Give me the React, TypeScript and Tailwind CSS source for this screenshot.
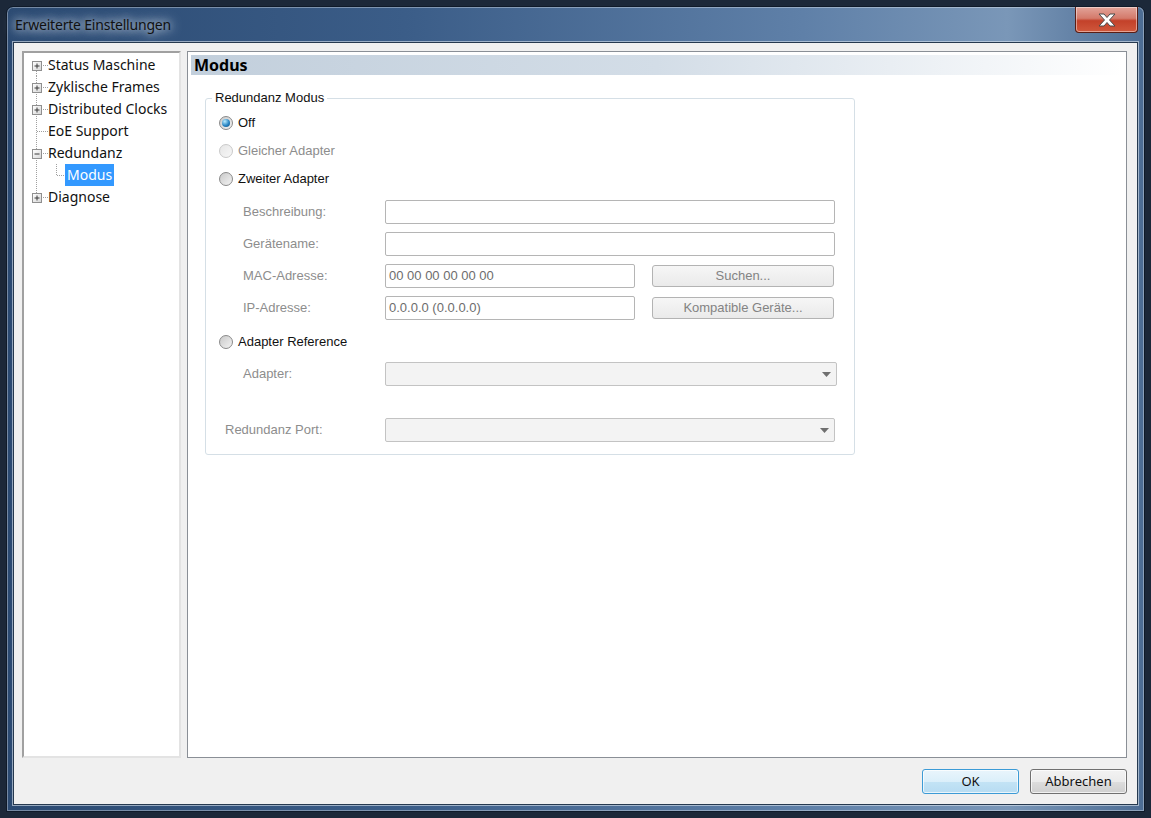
import React from 'react';

const sans = { fontFamily: '"Noto Sans", sans-serif' };
const arial = { fontFamily: '"Liberation Sans", Arial, sans-serif' };

type TreeRow = { label: string; box?: 'plus' | 'minus'; first?: boolean; last?: boolean; child?: boolean; selected?: boolean };

const treeRows: TreeRow[] = [
  { label: 'Status Maschine', box: 'plus', first: true },
  { label: 'Zyklische Frames', box: 'plus' },
  { label: 'Distributed Clocks', box: 'plus' },
  { label: 'EoE Support' },
  { label: 'Redundanz', box: 'minus' },
  { label: 'Modus', child: true, selected: true },
  { label: 'Diagnose', box: 'plus', last: true },
];

// gutter drawing: dotted lines + expander box
function Gutter({ row }: { row: TreeRow }) {
  const y1 = row.first ? 11 : 0;
  const y2 = row.last ? 11 : 22;
  return (
    <svg width="24" height="22" className="shrink-0">
      <line x1="12.5" y1={y1} x2="12.5" y2={y2} stroke="#a0a0a0" strokeDasharray="1 1" />
      {!row.child && <line x1="13" y1="11.5" x2="24" y2="11.5" stroke="#a0a0a0" strokeDasharray="1 1" />}
      {row.box && (
        <g>
          <defs>
            <linearGradient id="bx" x1="0" y1="0" x2="1" y2="1">
              <stop offset="0" stopColor="#ffffff" />
              <stop offset="1" stopColor="#d6d6d6" />
            </linearGradient>
          </defs>
          <rect x="8.5" y="7.5" width="9" height="9" fill="url(#bx)" stroke="#8f8f8f" />
          <line x1="10.5" y1="12" x2="15.5" y2="12" stroke="#3b3b3b" />
          {row.box === 'plus' && <line x1="13" y1="9.5" x2="13" y2="14.5" stroke="#3b3b3b" />}
        </g>
      )}
    </svg>
  );
}

function Radio({ checked, disabled }: { checked?: boolean; disabled?: boolean }) {
  return (
    <span
      className={
        'inline-flex h-[14px] w-[14px] shrink-0 items-center justify-center rounded-full border ' +
        (disabled
          ? 'border-[#c9c9c9] bg-[linear-gradient(135deg,#e6e6e6,#f7f7f7)]'
          : 'border-[#8a8a8a] bg-[linear-gradient(135deg,#c9c9c9,#f3f3f3)]')
      }
    >
      {checked && (
        <span className="h-[8px] w-[8px] rounded-full bg-[radial-gradient(circle_at_35%_30%,#b9ecff,#2a86c4_55%,#0d4a7c)]" />
      )}
    </span>
  );
}

function TextBox({ value, width = 'w-[450px]' }: { value?: string; width?: string }) {
  return (
    <div
      className={width + ' flex h-[24px] items-center rounded-[2px] border border-[#b5b5b5] bg-white pl-[3px] text-[13px] text-[#6d6d6d]'}
      style={arial}
    >
      {value}
    </div>
  );
}

function Combo({ width }: { width: string }) {
  return (
    <div className={width + ' flex h-[24px] items-center justify-end rounded-[2px] border border-[#c3c3c3] bg-[#f3f3f3] pr-[5px]'}>
      <svg width="9" height="5" viewBox="0 0 9 5">
        <path d="M0 0 H9 L4.5 5 Z" fill="#6f6f6f" />
      </svg>
    </div>
  );
}

function GrayButton({ label }: { label: string }) {
  return (
    <div
      className="ml-[17px] flex h-[22px] w-[182px] items-center justify-center rounded-[3px] border border-[#b3b3b3] bg-[linear-gradient(#f6f6f6,#eaeaea)] text-[13px] text-[#838383]"
      style={arial}
    >
      {label}
    </div>
  );
}

function FieldLabel({ text, indent = 'pl-[37px]', width = 'w-[179px]' }: { text: string; indent?: string; width?: string }) {
  return (
    <div className={width + ' ' + indent + ' shrink-0 text-[13px] text-[#8d8d8d]'} style={arial}>
      {text}
    </div>
  );
}

export default function App() {
  return (
    <div className="h-[818px] w-[1151px] overflow-hidden bg-[#1c2839] p-[6px]">
      <div className="flex h-[806px] w-[1139px] flex-col rounded-t-[7px] border border-[#0f1a29] bg-[linear-gradient(90deg,#2b4a72_0%,#3b5d88_35%,#5f80a8_70%,#7a97b8_88%,#4d6d94_100%)] px-[6px] pb-[6px] shadow-[inset_0_0_0_1px_rgba(255,255,255,0.35)]">
        {/* title bar */}
        <div className="flex h-[35px] shrink-0 items-start justify-between">
          <div
            className="mt-[9px] pl-[2px] text-[14px] leading-[18px] tracking-[-0.2px] text-[#111] [text-shadow:0_0_8px_#dfe8f2,0_0_14px_#cdd9e6]"
            style={sans}
          >
            Erweiterte Einstellungen
          </div>
          <div className="flex h-[26px] w-[63px] items-center justify-center rounded-b-[4px] border border-t-0 border-[#5a1d14] bg-[linear-gradient(#e2a49a_0%,#d47a6b_45%,#c3412a_55%,#d0583c_100%)] shadow-[inset_0_0_0_1px_rgba(255,255,255,0.45)]">
            <svg width="22" height="16" viewBox="0 0 22 16">
              <path d="M3 2 L8 2 L11 5.5 L14 2 L19 2 L13.5 8 L19 14 L14 14 L11 10.5 L8 14 L3 14 L8.5 8 Z" fill="#ffffff" stroke="#4a4a4a" strokeWidth="1" strokeLinejoin="round" />
            </svg>
          </div>
        </div>

        {/* client area */}
        <div className="flex min-h-0 flex-1 flex-col border border-[#26394f] bg-[#f0f0f0] pb-[10px] pl-[8px] pr-[10px] pt-[8px] shadow-[0_0_0_1px_rgba(220,230,240,0.6)]">
          <div className="flex min-h-0 flex-1 gap-[6px]">
            {/* tree */}
            <div className="w-[159px] shrink-0 border-2 border-b-[#e3e3e3] border-l-[#a0a0a0] border-r-[#e3e3e3] border-t-[#a0a0a0] bg-white pt-[1px]">
              {treeRows.map((row) => (
                <div key={row.label} className="flex h-[22px] items-center">
                  <Gutter row={row} />
                  {row.child && (
                    <svg width="17" height="22" className="shrink-0">
                      <line x1="8.5" y1="0" x2="8.5" y2="11" stroke="#a0a0a0" strokeDasharray="1 1" />
                      <line x1="9" y1="11.5" x2="17" y2="11.5" stroke="#a0a0a0" strokeDasharray="1 1" />
                    </svg>
                  )}
                  <span
                    className={
                      'text-[14px] leading-[22px] ' + (row.selected ? 'bg-[#3399ff] px-[2px] text-white' : 'text-[#111]')
                    }
                    style={sans}
                  >
                    {row.label}
                  </span>
                </div>
              ))}
            </div>

            {/* right panel */}
            <div className="flex min-w-0 flex-1 flex-col border border-[#8a8f96] bg-white p-[3px]">
              <div
                className="flex h-[20px] items-center bg-[linear-gradient(90deg,#c2cfdc_0%,#d3dde7_50%,#ffffff_100%)] pl-[3px] text-[16px] font-bold text-black"
                style={sans}
              >
                Modus
              </div>

              <fieldset className="ml-[14px] mt-[15px] w-[650px] rounded-[3px] border border-[#d5dfe6] pb-[12px]">
                <legend className="ml-[6px] px-[3px] text-[13px] leading-[16px] text-[#111]" style={arial}>
                  Redundanz Modus
                </legend>
                <div className="flex flex-col pl-[13px] pt-[3px]" style={arial}>
                  <div className="flex h-[28px] items-center gap-[5px] text-[13px] text-[#111]">
                    <Radio checked />
                    Off
                  </div>
                  <div className="flex h-[28px] items-center gap-[5px] text-[13px] text-[#8d8d8d]">
                    <Radio disabled />
                    Gleicher Adapter
                  </div>
                  <div className="flex h-[28px] items-center gap-[5px] text-[13px] text-[#111]">
                    <Radio />
                    Zweiter Adapter
                  </div>
                </div>

                <div className="mt-[7px] flex flex-col gap-[8px]">
                  <div className="flex items-center">
                    <FieldLabel text="Beschreibung:" />
                    <TextBox />
                  </div>
                  <div className="flex items-center">
                    <FieldLabel text="Gerätename:" />
                    <TextBox />
                  </div>
                  <div className="flex items-center">
                    <FieldLabel text="MAC-Adresse:" />
                    <TextBox value="00 00 00 00 00 00" width="w-[250px]" />
                    <GrayButton label="Suchen..." />
                  </div>
                  <div className="flex items-center">
                    <FieldLabel text="IP-Adresse:" />
                    <TextBox value="0.0.0.0 (0.0.0.0)" width="w-[250px]" />
                    <GrayButton label="Kompatible Geräte..." />
                  </div>
                </div>

                <div className="mt-[8px] flex h-[28px] items-center gap-[5px] pl-[13px] text-[13px] text-[#111]" style={arial}>
                  <Radio />
                  Adapter Reference
                </div>
                <div className="mt-[6px] flex items-center">
                  <FieldLabel text="Adapter:" />
                  <Combo width="w-[452px]" />
                </div>
                <div className="mt-[32px] flex items-center">
                  <FieldLabel text="Redundanz Port:" indent="pl-[19px]" />
                  <Combo width="w-[450px]" />
                </div>
              </fieldset>
            </div>
          </div>

          {/* buttons */}
          <div className="mt-[11px] flex shrink-0 justify-end gap-[11px]" style={sans}>
            <div className="flex h-[25px] w-[97px] items-center justify-center rounded-[3px] border border-[#3c9bd6] bg-[linear-gradient(#e9f5fc_0%,#dbeffa_50%,#c3e3f5_51%,#b7dcf2_100%)] text-[13px] text-[#111] shadow-[inset_0_0_0_1px_rgba(255,255,255,0.7)]">
              OK
            </div>
            <div className="flex h-[25px] w-[97px] items-center justify-center rounded-[3px] border border-[#707070] bg-[linear-gradient(#f2f2f2_0%,#ebebeb_50%,#dddddd_51%,#cfcfcf_100%)] text-[13px] text-[#111] shadow-[inset_0_0_0_1px_rgba(255,255,255,0.7)]">
              Abbrechen
            </div>
          </div>
        </div>
      </div>
    </div>
  );
}
